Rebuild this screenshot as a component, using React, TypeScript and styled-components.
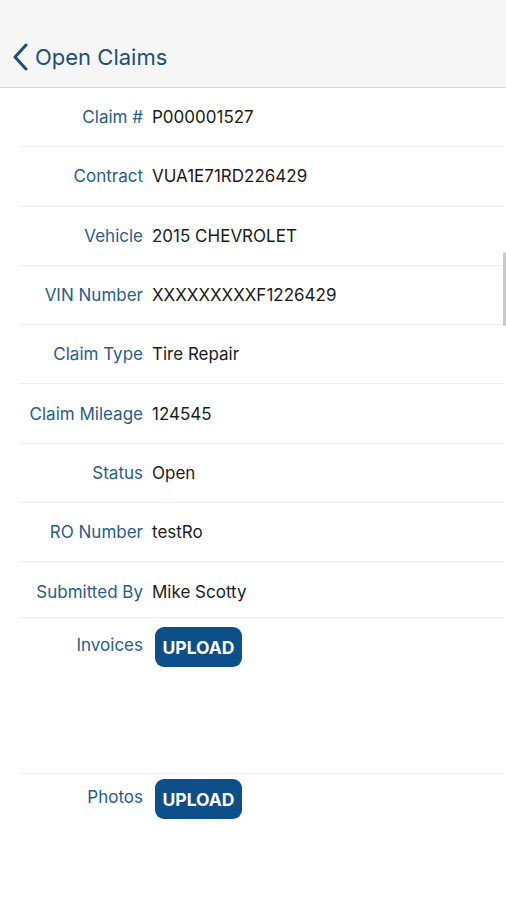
import styled, { createGlobalStyle } from "styled-components";

const GlobalStyle = createGlobalStyle`
  html, body {
    margin: 0;
    padding: 0;
    background: #fff;
    font-family: "Inter", "Liberation Sans", sans-serif;
  }
  * { box-sizing: border-box; }
`;

const Screen = styled.div`
  position: relative;
  width: 506px;
  height: 900px;
  overflow: hidden;
  background: #fff;
`;

const NavBar = styled.header`
  height: 88px;
  padding-top: 30px;
  background: #f6f6f7;
  border-bottom: 1px solid #d9d9db;
  display: flex;
  align-items: center;
`;

const BackButton = styled.button`
  display: flex;
  align-items: center;
  gap: 6px;
  margin-left: 11px;
  margin-top: -3px;
  padding: 0;
  border: none;
  background: none;
  color: #1d4f7e;
  font-family: inherit;
  font-size: 22px;
  font-weight: 400;
  cursor: pointer;
`;

const List = styled.div`
  display: flex;
  flex-direction: column;
`;

interface RowProps {
  readonly $height: number;
  readonly $pad?: number;
  readonly $top?: boolean;
}

const Row = styled.div<RowProps>`
  display: grid;
  grid-template-columns: 123px 1fr;
  column-gap: 9px;
  align-items: ${props => props.$top ? 'start' : 'center'};
  height: ${props => props.$height}px;
  margin-left: 20px;
  margin-right: 2px;
  padding-top: ${props => props.$pad || 0}px;
  border-bottom: 1px solid #efefef;
`;

const Label = styled.span<{ readonly $button?: boolean }>`
  text-align: right;
  color: #275d8c;
  font-size: 17px;
  white-space: nowrap;
  padding-top: ${props => props.$button ? '8px' : '0'};
`;

const Value = styled.span`
  color: #1b1b1b;
  font-size: 17px;
  white-space: nowrap;
`;

const UploadButton = styled.button`
  width: 87px;
  height: 40px;
  margin-left: 3px;
  border: none;
  border-radius: 9px;
  background: #0c4f8a;
  color: #fff;
  font-family: inherit;
  font-size: 17.5px;
  font-weight: 700;
  cursor: pointer;
`;

const ScrollThumb = styled.div`
  position: absolute;
  right: 0;
  top: 252px;
  width: 3px;
  height: 74px;
  border-radius: 2px;
  background: #c9c9cc;
`;

const fields: [string, string][] = [
  ["Claim #", "P000001527"],
  ["Contract", "VUA1E71RD226429"],
  ["Vehicle", "2015 CHEVROLET"],
  ["VIN Number", "XXXXXXXXXF1226429"],
  ["Claim Type", "Tire Repair"],
  ["Claim Mileage", "124545"],
  ["Status", "Open"],
  ["RO Number", "testRo"],
];

export default function App() {
  return (
    <Screen>
      <GlobalStyle />
      <NavBar>
        <BackButton>
          <svg width="18" height="28" viewBox="0 0 18 28" fill="none">
            <path d="M15 2 L4 14 L15 26" stroke="#1d4f7e" strokeWidth="3" strokeLinecap="round" strokeLinejoin="round" />
          </svg>
          Open Claims
        </BackButton>
      </NavBar>
      <List>
        {fields.map(([label, value]) => (
          <Row key={label} $height={59.3}>
            <Label>{label}</Label>
            <Value>{value}</Value>
          </Row>
        ))}
        <Row $height={56} $pad={4}>
          <Label>Submitted By</Label>
          <Value>Mike Scotty</Value>
        </Row>
        <Row $height={156} $pad={9} $top>
          <Label $button>Invoices</Label>
          <div><UploadButton>UPLOAD</UploadButton></div>
        </Row>
        <Row $height={156} $pad={5} $top>
          <Label $button>Photos</Label>
          <div><UploadButton>UPLOAD</UploadButton></div>
        </Row>
      </List>
      <ScrollThumb />
    </Screen>
  );
}
